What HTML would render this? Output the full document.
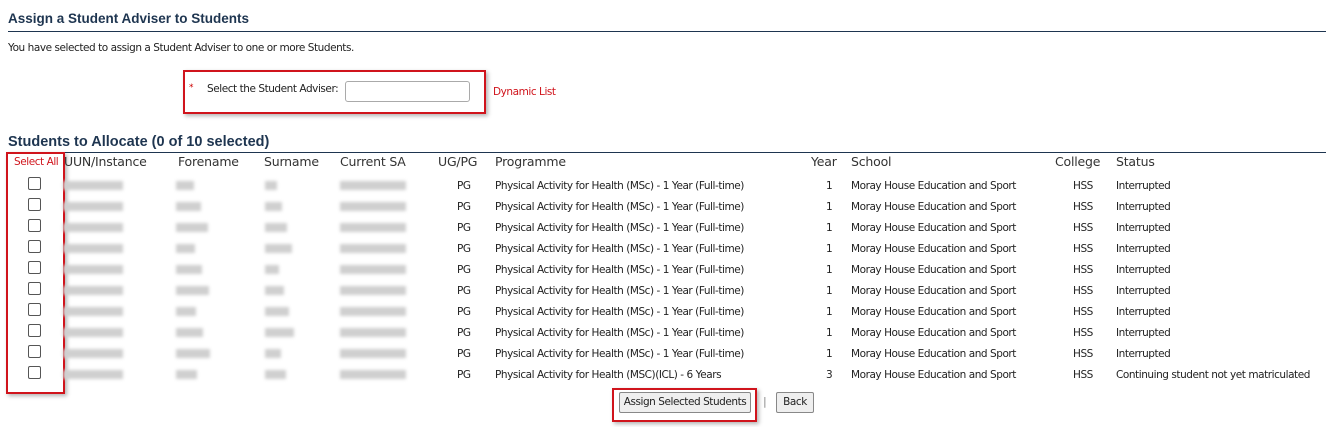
<!DOCTYPE html>
<html><head><meta charset="utf-8"><style>
body{margin:0;width:1326px;height:427px;background:#fff;font-family:"DejaVu Sans","Liberation Sans",sans-serif;color:#222;position:relative;overflow:hidden}
.a{position:absolute;white-space:nowrap}
.s{font-size:10.5px;letter-spacing:-0.45px}
.h{font-size:12.5px;color:#333;letter-spacing:-0.2px}
.b{position:absolute;height:9px;background:#cfcfcf;filter:blur(1.5px)}
.cb{position:absolute;left:28px;width:11px;height:11px;border:1px solid #555;border-radius:2px;background:#fff}
.red{position:absolute;border:2px solid #d0141c;box-shadow:2px 2px 4px rgba(0,0,0,.3)}
.btn{position:absolute;height:19px;border:1px solid #888;border-radius:2px;background:#efefef;font-size:10.5px;text-align:center;line-height:19px;letter-spacing:-0.45px}
</style></head><body>
<div class="a" style="left:8px;top:11px;font-size:13.5px;font-weight:bold;color:#1e3550;font-family:'Liberation Sans',sans-serif">Assign a Student Adviser to Students</div>
<div class="a" style="left:8px;top:31px;width:1318px;height:1px;background:#1e3550"></div>
<div class="a s" style="left:8px;top:42px">You have selected to assign a Student Adviser to one or more Students.</div>
<div class="red" style="left:183px;top:70px;width:299px;height:40px"></div>
<div class="a s" style="left:189px;top:83px;color:#c00;font-size:9px">*</div>
<div class="a s" style="left:207px;top:83px">Select the Student Adviser:</div>
<div class="a" style="left:345px;top:81px;width:123px;height:19px;border:1px solid #aaa;border-radius:3px"></div>
<div class="a s" style="left:493px;top:86px;color:#d0141c">Dynamic List</div>
<div class="a" style="left:8px;top:134px;font-size:14.5px;font-weight:bold;color:#1e3550;font-family:'Liberation Sans',sans-serif">Students to Allocate (0 of 10 selected)</div>
<div class="a" style="left:8px;top:152px;width:1318px;height:1px;background:#1e3550"></div>
<div class="red" style="left:6px;top:152px;width:55px;height:238px"></div>
<div class="a s" style="left:14px;top:156px;color:#d0141c">Select All</div>
<div class="a h" style="left:64px;top:154px">UUN/Instance</div>
<div class="a h" style="left:178px;top:154px">Forename</div>
<div class="a h" style="left:264px;top:154px">Surname</div>
<div class="a h" style="left:340px;top:154px">Current SA</div>
<div class="a h" style="left:438px;top:154px">UG/PG</div>
<div class="a h" style="left:495px;top:154px">Programme</div>
<div class="a h" style="left:811px;top:154px">Year</div>
<div class="a h" style="left:851px;top:154px">School</div>
<div class="a h" style="left:1055px;top:154px">College</div>
<div class="a h" style="left:1116px;top:154px">Status</div>
<div id="rows"></div>
<div class="red" style="left:612px;top:388px;width:141px;height:30px"></div>
<div class="btn" style="left:619px;top:392px;width:130px">Assign Selected Students</div>
<div class="a" style="left:763px;top:395px;font-size:11px;color:#888">|</div>
<div class="btn" style="left:776px;top:392px;width:36px">Back</div>
<script>
var h='';
for(var i=0;i<10;i++){var y=186+i*21;var last=i==9;
h+='<div class="cb" style="top:'+(y-9)+'px"></div>';
h+='<div class="b" style="left:63px;top:'+(y-5)+'px;width:60px"></div>';
h+='<div class="b" style="left:176px;top:'+(y-5)+'px;width:'+(18+(i*7)%20)+'px"></div>';
h+='<div class="b" style="left:265px;top:'+(y-5)+'px;width:'+(12+(i*5)%18)+'px"></div>';
h+='<div class="b" style="left:340px;top:'+(y-5)+'px;width:66px"></div>';
h+='<div class="a s" style="left:457px;top:'+(y-6)+'px">PG</div>';
h+='<div class="a s" style="left:495px;top:'+(y-6)+'px">'+(last?'Physical Activity for Health (MSC)(ICL) - 6 Years':'Physical Activity for Health (MSc) - 1 Year (Full-time)')+'</div>';
h+='<div class="a s" style="left:826px;top:'+(y-6)+'px">'+(last?'3':'1')+'</div>';
h+='<div class="a s" style="left:851px;top:'+(y-6)+'px">Moray House Education and Sport</div>';
h+='<div class="a s" style="left:1073px;top:'+(y-6)+'px">HSS</div>';
h+='<div class="a s" style="left:1116px;top:'+(y-6)+'px">'+(last?'Continuing student not yet matriculated':'Interrupted')+'</div>';}
document.getElementById('rows').innerHTML=h;
</script>
</body></html>
